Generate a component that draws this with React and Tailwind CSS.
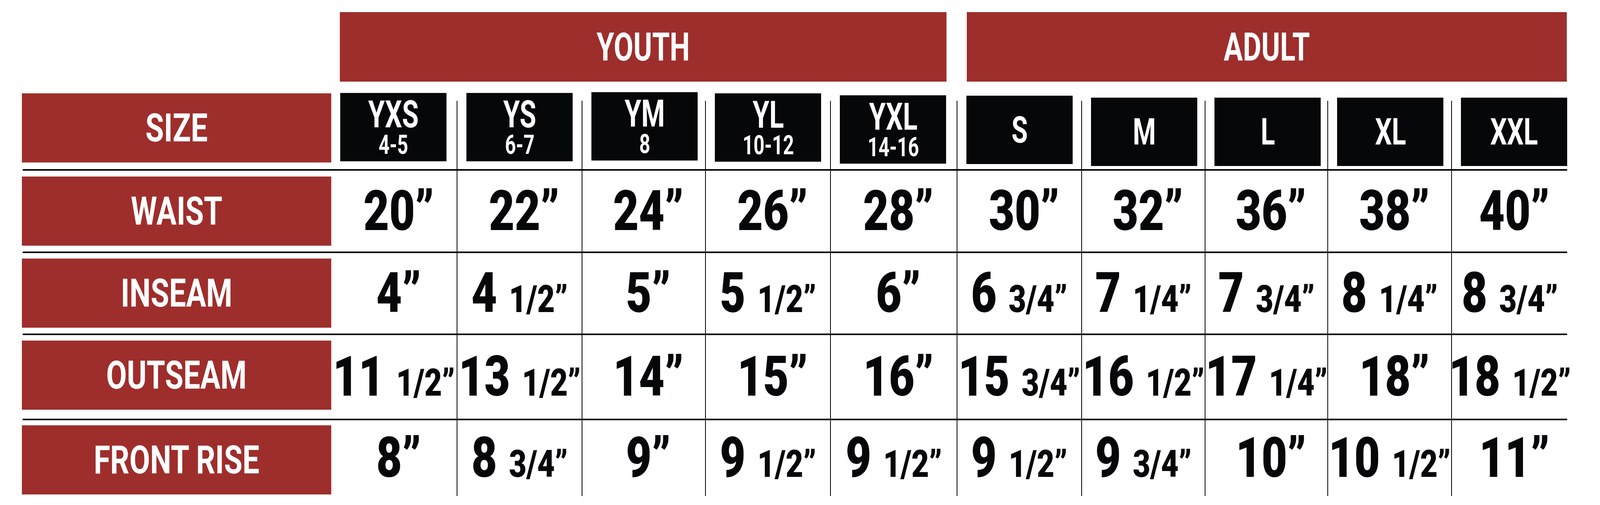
import React from 'react';

// label column + 10 size columns (frame is 4096px wide, 1293px high)
const COLS =
  'grid grid-cols-[792px_321px_320px_316px_320px_324px_319px_316px_314px_317px_298px]';

const sizes = [
  { name: 'YXS', sub: '4-5', top: 'mt-[2px]' },
  { name: 'YS', sub: '6-7', top: 'mt-[2px]' },
  { name: 'YM', sub: '8', top: 'mt-[0px]' },
  { name: 'YL', sub: '10-12', top: 'mt-[3px]' },
  { name: 'YXL', sub: '14-16', top: 'mt-[8px]' },
  { name: 'S', top: 'mt-[9px]' },
  { name: 'M', top: 'mt-[14px]' },
  { name: 'L', top: 'mt-[14px]' },
  { name: 'XL', top: 'mt-[14px]' },
  { name: 'XXL', top: 'mt-[14px]' },
];

const rows = [
  {
    label: 'WAIST',
    pad: 'pt-[15px] pb-[15px]',
    values: ['20', '22', '24', '26', '28', '30', '32', '36', '38', '40'],
  },
  {
    label: 'INSEAM',
    pad: 'pt-[14px] pb-[15px]',
    values: ['4', '4 1/2', '5', '5 1/2', '6', '6 3/4', '7 1/4', '7 3/4', '8 1/4', '8 3/4'],
  },
  {
    label: 'OUTSEAM',
    pad: 'pt-[14px] pb-[23px]',
    values: ['11 1/2', '13 1/2', '14', '15', '16', '15 3/4', '16 1/2', '17 1/4', '18', '18 1/2'],
  },
  {
    label: 'FRONT RISE',
    pad: 'pt-[13px] pb-[4px]',
    values: ['8', '8 3/4', '9', '9 1/2', '9 1/2', '9 1/2', '9 3/4', '10', '10 1/2', '11'],
  },
];

const Rule = () => <div className="h-[4px] w-[3954px] ml-[1.5px] bg-black" />;

const RedLabel = ({ children }) => (
  <div className="h-[177px] bg-[#9e2e2c] flex items-center justify-center">
    <span className="text-white font-bold text-[101px] leading-none whitespace-nowrap scale-x-[0.76]">
      {children}
    </span>
  </div>
);

const Value = ({ text }) => {
  const [whole, frac] = text.split(' ');
  return (
    <span className="whitespace-nowrap font-black text-[#060709] leading-none scale-x-[0.8]">
      <span className="text-[142px]">{whole}</span>
      {frac ? (
        <span className="text-[97px] ml-[38px]">{frac}”</span>
      ) : (
        <span className="text-[142px]">”</span>
      )}
    </span>
  );
};

const App = () => {
  return (
    <div className="w-[4096px] h-[1293px] bg-white pt-[31px] pl-[56px] font-['Roboto','Liberation_Sans',sans-serif]">
      {/* Youth / Adult group bars */}
      <div className={COLS}>
        <div />
        <div className="col-span-5">
          <div className="ml-[22.4px] w-[1552.2px] h-[178px] bg-[#9e2e2c] flex items-center justify-center">
            <span className="text-white font-bold text-[101px] leading-none scale-x-[0.72]">YOUTH</span>
          </div>
        </div>
        <div className="col-span-5">
          <div className="ml-[26.3px] w-[1536px] h-[178px] bg-[#9e2e2c] flex items-center justify-center">
            <span className="text-white font-bold text-[101px] leading-none scale-x-[0.72]">ADULT</span>
          </div>
        </div>
      </div>

      {/* Size header row */}
      <div className={`${COLS} mt-[27px] h-[197px]`}>
        <div className="pt-[3px]">
          <RedLabel>SIZE</RedLabel>
        </div>
        {sizes.map((s, i) => (
          <div key={s.name} className="flex items-start">
            {i > 0 && <div className="w-[2.3px] self-stretch mt-[22px] bg-black" />}
            <div
              className={`ml-[23.2px] w-[272px] h-[175px] bg-[#060709] flex items-center justify-center ${s.sub ? 'pb-[6px]' : ''} ${s.top}`}
            >
              <div className="flex flex-col items-center text-white font-bold leading-none scale-x-[0.71]">
                <span className={s.sub ? 'text-[97px]' : 'text-[95px]'}>{s.name}</span>
                {s.sub && <span className="text-[69px] leading-[58px]">{s.sub}</span>}
              </div>
            </div>
          </div>
        ))}
      </div>

      {rows.map((row) => (
        <div key={row.label}>
          <Rule />
          <div className={COLS}>
            <div className={row.pad}>
              <RedLabel>{row.label}</RedLabel>
            </div>
            {row.values.map((v, i) => (
              <div
                key={i}
                className={`flex items-center justify-center ${v.includes(' ') ? '' : 'pl-[24px]'} ${i > 0 ? 'border-l-[2.3px] border-black' : ''}`}
              >
                <Value text={v} />
              </div>
            ))}
          </div>
        </div>
      ))}
    </div>
  );
};

export default App;
